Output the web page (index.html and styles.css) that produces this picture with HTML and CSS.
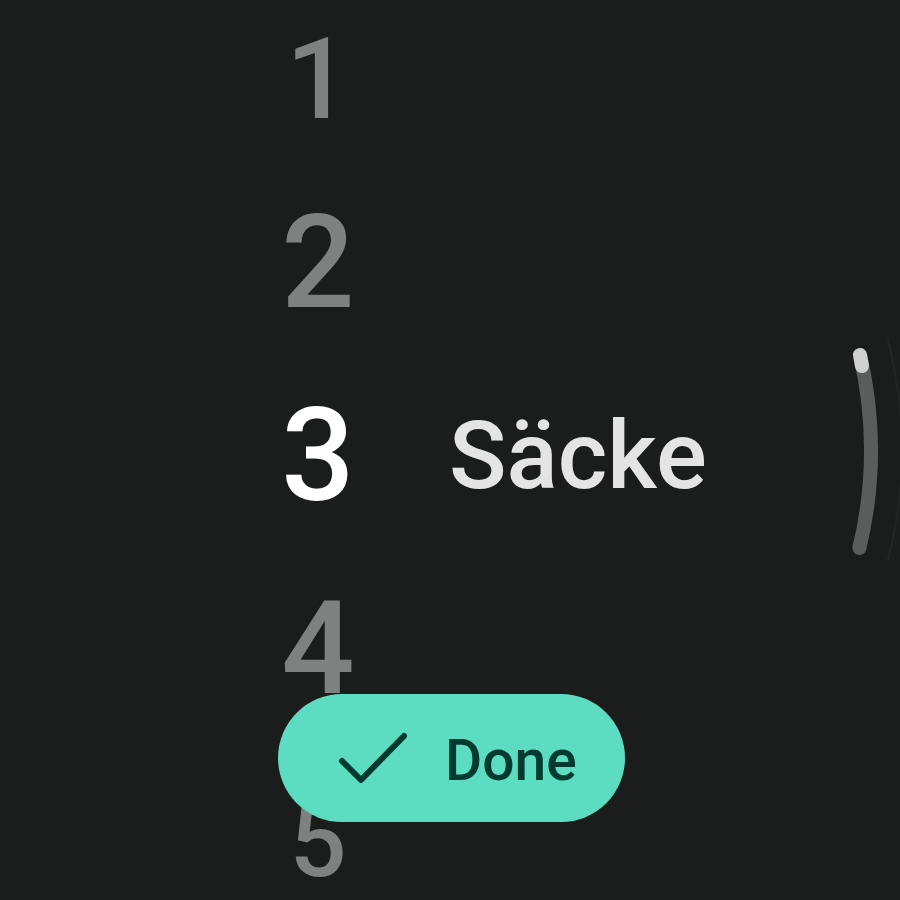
FILE: index.html
```html
<!DOCTYPE html>
<html lang="de">
<head>
<meta charset="utf-8">
<title>Picker</title>
<link rel="stylesheet" href="styles.css">
</head>
<body>
<div class="screen">
  <div class="picker">
    <div class="row"><span class="num far r1">1</span></div>
    <div class="row"><span class="num near">2</span></div>
    <div class="row selected"><span class="num sel">3</span><span class="label">Säcke</span></div>
    <div class="row"><span class="num near">4</span></div>
    <div class="row"><span class="num far r5">5</span></div>
  </div>

  <svg class="scrollbar" width="900" height="900" viewBox="0 0 900 900" aria-hidden="true">
    <path class="edge" d="M888 340 A446 446 0 0 1 888 560"/>
    <path class="track" d="M860 355 A421 421 0 0 1 859.4 548"/>
    <path class="thumb" d="M860 355 A421 421 0 0 1 862 366"/>
  </svg>

  <button class="done">
    <svg class="check" width="70" height="52" viewBox="0 0 70 52" aria-hidden="true">
      <path d="M4 29 L23 48 L66 4"/>
    </svg>
    <span class="done-text">Done</span>
  </button>
</div>
</body>
</html>
```

FILE: styles.css
```css
html, body {
  margin: 0;
  padding: 0;
  background: #1b1d1c;
}

.screen {
  position: relative;
  width: 900px;
  height: 900px;
  overflow: hidden;
  background: #1b1d1c;
  font-family: Roboto, "Noto Sans", sans-serif;
}

.picker {
  display: flex;
  flex-direction: column;
  margin-top: -27px;
}

.row {
  height: 193px;
  display: flex;
  align-items: center;
  padding-left: 248px;
}

.num {
  width: 140px;
  text-align: center;
  font-size: 129px;
  font-weight: 500;
  line-height: 1;
  color: #7f8180;
}

.num.sel {
  color: #ffffff;
}

.num.r1 {
  transform: translateY(10px) scale(0.87);
}

.num.r5 {
  transform: scale(0.78);
}

.label {
  margin-left: 61px;
  font-size: 95px;
  font-weight: 500;
  line-height: 1;
  color: #e4e4e4;
}

.scrollbar {
  position: absolute;
  left: 0;
  top: 0;
  pointer-events: none;
}

.scrollbar path {
  fill: none;
  stroke-linecap: round;
}

.scrollbar .edge {
  stroke: #232524;
  stroke-width: 2;
}

.scrollbar .track {
  stroke: #5b5d5c;
  stroke-width: 14;
}

.scrollbar .thumb {
  stroke: #cfd0cf;
  stroke-width: 14;
}

.done {
  position: absolute;
  left: 278px;
  top: 694px;
  width: 347px;
  height: 128px;
  border: 0;
  border-radius: 64px;
  background: #5cdcc0;
  display: flex;
  align-items: center;
  padding: 0 0 0 60px;
  box-sizing: border-box;
  font-family: Roboto, "Noto Sans", sans-serif;
}

.check {
  display: block;
  flex: none;
}

.check path {
  fill: none;
  stroke: #00392f;
  stroke-width: 6;
  stroke-linecap: round;
  stroke-linejoin: round;
}

.done-text {
  margin-left: 37px;
  padding-top: 4px;
  font-size: 57px;
  font-weight: 500;
  line-height: 1;
  color: #003a30;
}
```
